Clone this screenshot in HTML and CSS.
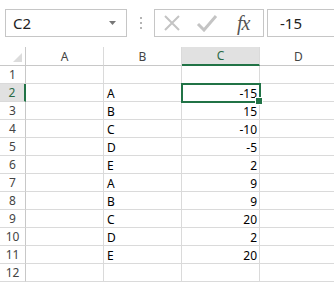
FILE: index.html
```html
<!DOCTYPE html>
<html lang="en">
<head>
  <meta charset="UTF-8">
  <title>Sheet1</title>
  <link rel="stylesheet" href="styles.css">
</head>
<body>
  <!-- 编辑栏 -->
  <div class="formula-bar">
    <div class="name-box">
      <span>C2</span>
      <svg class="drop" width="7" height="4" viewBox="0 0 7 4"><path d="M0 0h7L3.5 4z" fill="#777"/></svg>
    </div>
    <div class="grip"><i></i><i></i><i></i></div>
    <div class="fx-buttons">
      <svg width="18" height="18" viewBox="0 0 18 18"><path d="M2 2L16 16M16 2L2 16" stroke="#c4c4c4" stroke-width="2" fill="none"/></svg>
      <svg width="22" height="18" viewBox="0 0 22 18"><path d="M2 10L8 16L20 2" stroke="#c4c4c4" stroke-width="3" fill="none"/></svg>
      <span class="fx">fx</span>
    </div>
    <div class="formula-input">-15</div>
  </div>
  <!-- 表格 -->
  <div class="sheet">
    <div class="corner"></div>
    <div class="col-head">A</div>
    <div class="col-head">B</div>
    <div class="col-head selected">C</div>
    <div class="col-head">D</div>

    <div class="row-head">1</div><div class="cell"></div><div class="cell"></div><div class="cell"></div><div class="cell"></div>
    <div class="row-head selected">2</div><div class="cell"></div><div class="cell">A</div><div class="cell num active">-15</div><div class="cell"></div>
    <div class="row-head">3</div><div class="cell"></div><div class="cell">B</div><div class="cell num">15</div><div class="cell"></div>
    <div class="row-head">4</div><div class="cell"></div><div class="cell">C</div><div class="cell num">-10</div><div class="cell"></div>
    <div class="row-head">5</div><div class="cell"></div><div class="cell">D</div><div class="cell num">-5</div><div class="cell"></div>
    <div class="row-head">6</div><div class="cell"></div><div class="cell">E</div><div class="cell num">2</div><div class="cell"></div>
    <div class="row-head">7</div><div class="cell"></div><div class="cell">A</div><div class="cell num">9</div><div class="cell"></div>
    <div class="row-head">8</div><div class="cell"></div><div class="cell">B</div><div class="cell num">9</div><div class="cell"></div>
    <div class="row-head">9</div><div class="cell"></div><div class="cell">C</div><div class="cell num">20</div><div class="cell"></div>
    <div class="row-head">10</div><div class="cell"></div><div class="cell">D</div><div class="cell num">2</div><div class="cell"></div>
    <div class="row-head">11</div><div class="cell"></div><div class="cell">E</div><div class="cell num">20</div><div class="cell"></div>
    <div class="row-head">12</div><div class="cell"></div><div class="cell"></div><div class="cell"></div><div class="cell"></div>
  </div>
</body>
</html>
```

FILE: styles.css
```css
* {
  margin: 0;
  padding: 0;
  box-sizing: border-box;
}
body {
  width: 334px;
  height: 282px;
  overflow: hidden;
  background: #fff;
  font-family: "Noto Sans", "Open Sans", sans-serif;
}
.formula-bar {
  height: 47px;
  padding: 9px 0 0 5px;
  display: flex;
  align-items: flex-start;
}
.name-box {
  width: 122px;
  height: 28px;
  border: 1px solid #c6c6c6;
  display: flex;
  align-items: center;
  justify-content: space-between;
  padding: 0 10px 0 7px;
  font-size: 15px;
  color: #222;
}
.grip {
  width: 27px;
  height: 28px;
  display: flex;
  flex-direction: column;
  align-items: center;
  justify-content: center;
  gap: 3px;
}
.grip > i {
  width: 2px;
  height: 2px;
  background: #b4b4b4;
}
.fx-buttons {
  width: 110px;
  height: 28px;
  border: 1px solid #c6c6c6;
  display: flex;
  align-items: center;
  padding: 0 8px 0 8px;
  gap: 15px;
}
.fx {
  font-family: "Liberation Serif", "DejaVu Serif", serif;
  font-style: italic;
  font-size: 20px;
  color: #555;
  margin-left: 4px;
  letter-spacing: -1px;
}
.formula-input {
  flex: 1;
  margin-left: 3px;
  height: 28px;
  border: 1px solid #c6c6c6;
  border-right: none;
  display: flex;
  align-items: center;
  padding-left: 12px;
  font-size: 15px;
  color: #222;
}
.sheet {
  display: grid;
  grid-template-columns: 26px repeat(4, 78px);
  grid-template-rows: 19px;
  grid-auto-rows: 18px;
  font-size: 12px;
}
.corner,
.col-head,
.row-head,
.cell {
  border-right: 1px solid #dadada;
  border-bottom: 1px solid #dadada;
  display: flex;
  align-items: center;
}
.corner {
  position: relative;
  border-right-color: #c8c8c8;
  border-bottom-color: #c8c8c8;
}
.corner::after {
  content: "";
  position: absolute;
  right: 3px;
  bottom: 3px;
  width: 9px;
  height: 9px;
  background: #dcdcdc;
  clip-path: polygon(100% 0, 100% 100%, 0 100%);
}
.col-head {
  justify-content: center;
  color: #444;
  border-bottom-color: #c8c8c8;
}
.row-head {
  justify-content: center;
  color: #444;
  border-right-color: #c8c8c8;
}
.col-head.selected {
  background: #e1e1e1;
  color: #2a6a46;
  border-bottom: 2px solid #217346;
}
.row-head.selected {
  background: #e1e1e1;
  color: #2a6a46;
  border-right: 2px solid #217346;
}
.cell {
  padding: 1px 3px 0;
  color: #000;
}
.cell.num {
  justify-content: flex-end;
  padding-right: 2px;
}
.cell.active {
  position: relative;
  outline: 2px solid #217346;
  outline-offset: -1px;
}
.cell.active::after {
  content: "";
  position: absolute;
  right: -4px;
  bottom: -4px;
  width: 6px;
  height: 6px;
  background: #217346;
  border: 1px solid #fff;
}
```
